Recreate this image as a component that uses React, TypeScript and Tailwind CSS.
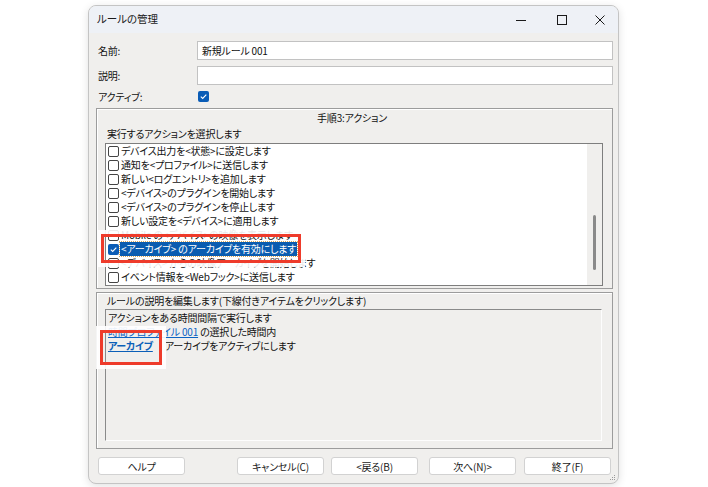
import React from "react";

const FONT = "[font-family:'Noto_Sans_CJK_JP',sans-serif] [font-feature-settings:'palt']";

function Box({ checked }: { checked?: boolean }) {
  if (checked) {
    return (
      <span className="w-[11px] h-[11px] rounded-[2px] bg-[#0a5cb6] flex items-center justify-center shrink-0">
        <svg width="9" height="9" viewBox="0 0 9 9">
          <path d="M1.8 4.6 L3.7 6.4 L7.3 2.6" fill="none" stroke="#fff" strokeWidth="1.1" />
        </svg>
      </span>
    );
  }
  return <span className="w-[11px] h-[11px] rounded-[2px] border border-[#444] bg-white shrink-0" />;
}

const items = [
  "デバイス出力を<状態>に設定します",
  "通知を<プロファイル>に送信します",
  "新しい<ログエントリ>を追加します",
  "<デバイス>のプラグインを開始します",
  "<デバイス>のプラグインを停止します",
  "新しい設定を<デバイス>に適用します",
  "Mobile の<デバイス>の映像を表示します",
  "<アーカイブ> のアーカイブを有効にします",
  "<デバイス> からの映像アーカイブを開始します",
  "イベント情報を<Webフック>に送信します",
];

function Btn({ label, className }: { label: string; className?: string }) {
  return (
    <div
      className={
        "w-[87px] h-[18px] bg-white border border-[#d2d2d2] rounded-[3px] flex items-center justify-center text-[10px] text-[#1a1a1a] " +
        (className || "")
      }
    >
      {label}
    </div>
  );
}

export default function App() {
  return (
    <div className={"w-[708px] h-[487px] bg-white overflow-hidden relative " + FONT}>
      <div className="ml-[88px] mt-[5px] w-[531px] h-[479px] rounded-[8px] border border-[#c4c4c4] bg-[#f0efed] flex flex-col relative shadow-[0_2px_8px_rgba(0,0,0,0.12)]">
        {/* title bar */}
        <div className="h-[27px] bg-[#eef1f6] rounded-t-[7px] flex items-center pl-[8px] shrink-0">
          <span className="text-[10.5px] text-[#1a1a1a] leading-none">ルールの管理</span>
          <div className="ml-auto flex h-full">
            <div className="w-[41px] flex items-center justify-center">
              <svg width="10" height="10" viewBox="0 0 10 10">
                <path d="M0 5.5 H10" stroke="#1a1a1a" strokeWidth="1" />
              </svg>
            </div>
            <div className="w-[41px] flex items-center justify-center">
              <svg width="10" height="10" viewBox="0 0 10 10">
                <rect x="0.5" y="0.5" width="9" height="9" fill="none" stroke="#1a1a1a" strokeWidth="1" />
              </svg>
            </div>
            <div className="w-[36px] flex items-center justify-center">
              <svg width="10" height="10" viewBox="0 0 10 10">
                <path d="M0.5 0.5 L9.5 9.5 M9.5 0.5 L0.5 9.5" stroke="#1a1a1a" strokeWidth="1" />
              </svg>
            </div>
          </div>
        </div>

        {/* body */}
        <div className="flex-1 flex flex-col pl-[7px] pr-[5px] text-[10px] tracking-[-0.2px] text-[#111]">
          <div className="mt-[8px] h-[19px] flex items-center">
            <span className="w-[101px] pl-[2px]">名前:</span>
            <div className="w-[416px] h-[19px] bg-white border border-[#c2c2c2] flex items-center pl-[4px]">
              新規ルール 001
            </div>
          </div>
          <div className="mt-[6px] h-[19px] flex items-center">
            <span className="w-[101px] pl-[2px]">説明:</span>
            <div className="w-[416px] h-[19px] bg-white border border-[#c2c2c2]" />
          </div>
          <div className="mt-[3px] h-[16px] flex items-center">
            <span className="w-[101px] pl-[2px]">アクティブ:</span>
            <span className="ml-[1px]">
              <Box checked />
            </span>
          </div>

          {/* group 1 */}
          <div className="mt-[4px] h-[181px] border border-[#9c9c9c] shadow-[inset_1px_1px_0_#fff] flex flex-col pl-[8px] pr-[9px]">
            <div className="h-[17px] flex items-center justify-center pr-[4px]">手順3:アクション</div>
            <div className="h-[15px] flex items-center pl-[2px]">実行するアクションを選択します</div>
            <div className="mt-[2px] h-[143px] border border-[#7e7e7e] bg-white flex overflow-hidden">
              <div className="flex-1 flex flex-col">
                {items.map((t, i) => (
                  <div key={i} className="h-[14px] flex items-center pl-[2px] shrink-0 whitespace-nowrap">
                    <Box checked={i === 7} />
                    {i === 7 ? (
                      <span className="ml-[1px] px-[1px] bg-[#0a5cb0] text-white outline-1 outline-dotted outline-[#d9a75a] leading-[14px]">
                        {t}
                      </span>
                    ) : (
                      <span className="ml-[2px] leading-[14px]">{t}</span>
                    )}
                  </div>
                ))}
              </div>
              <div className="w-[15px] bg-[#f0efed] relative shrink-0">
                <div className="absolute left-[6px] top-[71px] w-[3px] h-[55px] rounded-full bg-[#8a8a8a]" />
              </div>
            </div>
          </div>

          {/* group 2 */}
          <div className="mt-[3px] h-[157px] border border-[#9c9c9c] shadow-[inset_1px_1px_0_#fff] flex flex-col pl-[8px] pr-[10px]">
            <div className="h-[15px] flex items-center pl-[2px]">ルールの説明を編集します(下線付きアイテムをクリックします)</div>
            <div className="mt-[1px] h-[132px] border-t border-l border-[#8a8a8a] border-r border-b border-r-[#fdfdfd] border-b-[#fdfdfd] flex flex-col pl-[2px] pt-[1px]">
              <div className="h-[14px] leading-[14px] whitespace-nowrap">アクションをある時間間隔で実行します</div>
              <div className="h-[14px] leading-[14px] whitespace-nowrap">
                <span className="text-[#0b63c4] underline">時間プロファイル 001</span>
                <span> の選択した時間内</span>
              </div>
              <div className="h-[14px] leading-[14px] whitespace-nowrap flex">
                <span className="text-[#0b5fb8] underline font-bold">アーカイブ</span>
                <span className="ml-[12px]">アーカイブをアクティブにします</span>
              </div>
            </div>
          </div>

          {/* buttons */}
          <div className="mt-[8px] flex pl-[2px] pr-[2px]">
            <Btn label="ヘルプ" />
            <Btn label="キャンセル(C)" className="ml-auto" />
            <Btn label="<戻る(B)" className="ml-[7px]" />
            <Btn label="次へ(N)>" className="ml-[11px]" />
            <Btn label="終了(F)" className="ml-[8px]" />
          </div>
        </div>

        {/* resize grip */}
        <svg className="absolute right-[2px] bottom-[2px]" width="7" height="7" viewBox="0 0 7 7">
          <rect x="5" y="1" width="1" height="1" fill="#9a9a9a" />
          <rect x="3" y="3" width="1" height="1" fill="#9a9a9a" />
          <rect x="5" y="3" width="1" height="1" fill="#9a9a9a" />
          <rect x="1" y="5" width="1" height="1" fill="#9a9a9a" />
          <rect x="3" y="5" width="1" height="1" fill="#9a9a9a" />
          <rect x="5" y="5" width="1" height="1" fill="#9a9a9a" />
        </svg>
      </div>

      {/* annotations */}
      <div className="absolute left-[101px] top-[234px] w-[200px] h-[29px] border-[3px] border-[#ee3b2b] ring-[4px] ring-white/90" />
      <div className="absolute left-[100px] top-[330px] w-[62px] h-[35px] border-[3px] border-[#ee3b2b] ring-[4px] ring-white/90" />
    </div>
  );
}
